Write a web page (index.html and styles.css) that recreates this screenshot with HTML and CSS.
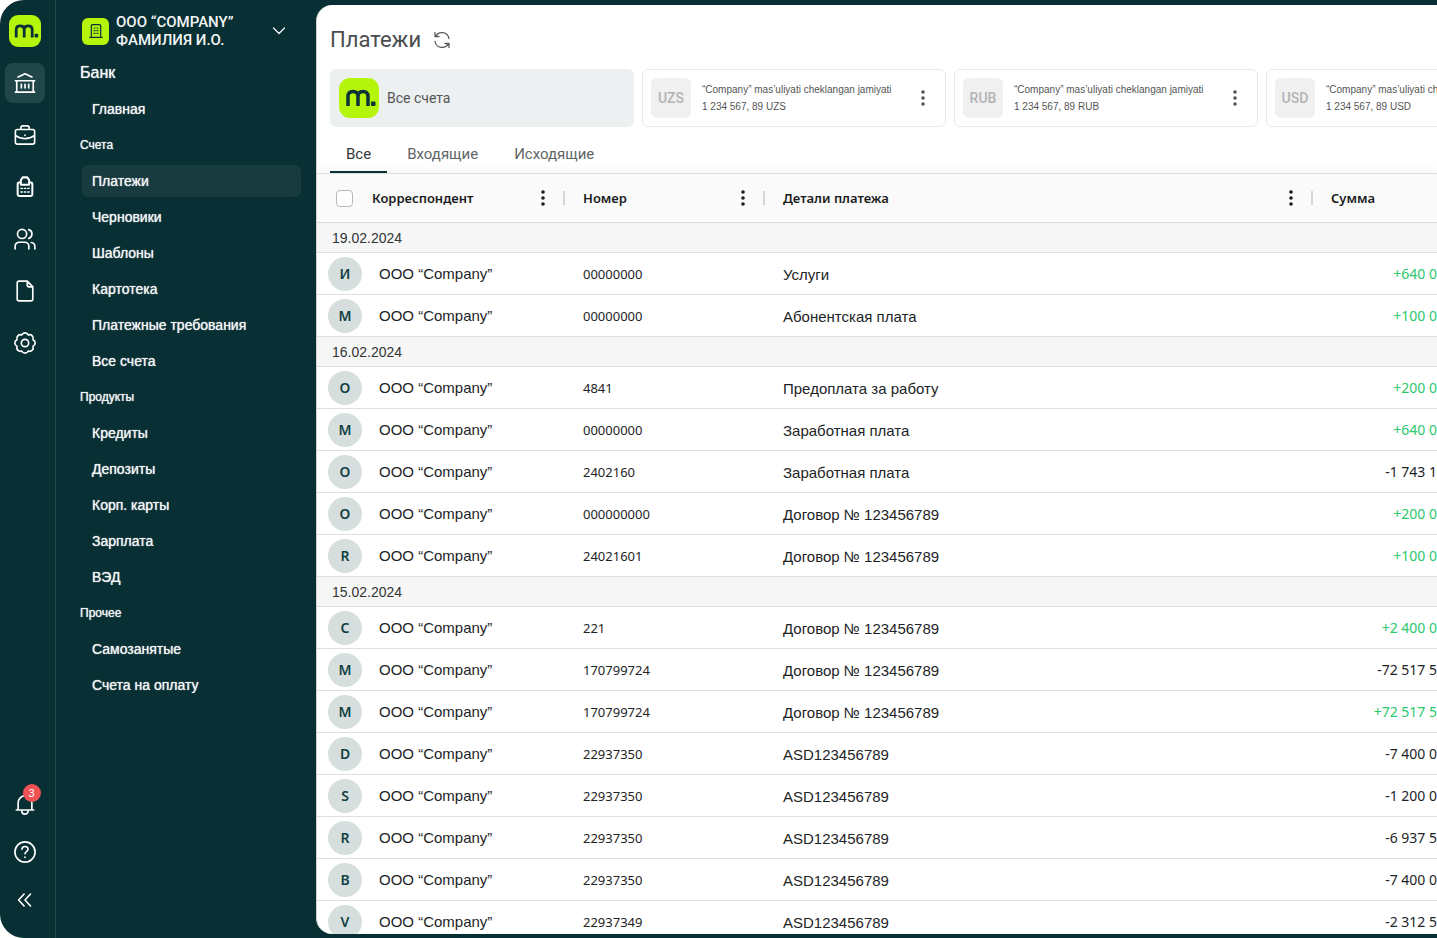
FILE: index.html
```html
<!DOCTYPE html>
<html lang="ru">
<head>
    <meta charset="UTF-8">
    <meta name="viewport" content="width=device-width, initial-scale=1.0">
    <title>Платежи</title>
    <link rel="stylesheet" href="styles.css">
</head>
<body>
    <div class="app">
        <!-- Узкая панель с иконками -->
        <nav class="rail" aria-label="Разделы">
            <a href="#" class="logo" aria-label="m">
                <svg viewBox="0 0 40 40"><path d="M9 28V18.500Q9 13.500 14 13.500Q19 13.500 19 18.500V28M19 18.500Q19 13.500 24 13.500Q29 13.500 29 18.500V28"/><rect x="32" y="23.500" width="4.500" height="4.500" rx="1"/></svg>
            </a>
            <a href="#" class="rail-item active" aria-label="Банк">
                <svg viewBox="0 0 24 24"><path d="M4.500 5.500 12 2 19.500 5.500M1.500 9.500h21M3 9.500v12M21 9.500v12M1.500 22h21M8 13.500v4M12 13.500v4M16 13.500v4"/></svg>
            </a>
            <a href="#" class="rail-item" aria-label="Портфель">
                <svg viewBox="0 0 24 24"><path d="M3.500 6h17a2 2 0 0 1 2 2V20a2 2 0 0 1-2 2h-17a2 2 0 0 1-2-2V8a2 2 0 0 1 2-2zM7.500 6V4a2 2 0 0 1 2-2h5a2 2 0 0 1 2 2v2M1.500 12.500Q6 16 12 16t10.500-3.500M12 12v.5"/></svg>
            </a>
            <a href="#" class="rail-item" aria-label="Касса">
                <svg class="bold" viewBox="0 0 24 24"><path d="M7 7H5.500a1.500 1.500 0 0 0-1.500 1.500V20a1.800 1.800 0 0 0 1.800 1.800h12.400A1.800 1.800 0 0 0 20 20V8.500A1.500 1.500 0 0 0 18.500 7H17M7.500 9.500V4.500L9.500 1.500h5l2 3v5z"/><path class="thin" d="M7.500 13.500H9M11.300 13.500h1.500M15 13.500h1.500M7.500 17.500H9M11.300 17.500h1.500M15 17.500h1.500"/></svg>
            </a>
            <a href="#" class="rail-item" aria-label="Сотрудники">
                <svg viewBox="0 0 24 24"><circle cx="8.800" cy="6.500" r="5"/><path d="M1.200 22.800V20a4.500 4.500 0 0 1 4.500-4.500h6A4.500 4.500 0 0 1 16.200 20v2.800M16 1.800a5 5 0 0 1 0 9.600M18.800 15.800a4.500 4.500 0 0 1 4 4.400v2.600"/></svg>
            </a>
            <a href="#" class="rail-item" aria-label="Документы">
                <svg viewBox="0 0 24 24"><path d="M14.500 1.200H5.500a2 2 0 0 0-2 2v17.600a2 2 0 0 0 2 2h13a2 2 0 0 0 2-2V7.500zM14.500 1.200v4.300a2 2 0 0 0 2 2h4"/></svg>
            </a>
            <a href="#" class="rail-item" aria-label="Настройки">
                <svg viewBox="0 0 24 24"><circle cx="12" cy="12" r="4"/><path d="M8.400 3.300a3.900 3.900 0 0 1 7.200 0a3.900 3.900 0 0 1 5.100 5.100a3.900 3.900 0 0 1 0 7.200a3.900 3.900 0 0 1-5.100 5.100a3.900 3.900 0 0 1-7.200 0a3.900 3.900 0 0 1-5.100-5.100a3.900 3.900 0 0 1 0-7.200a3.900 3.900 0 0 1 5.100-5.100z"/></svg>
            </a>
            <div class="rail-bottom">
                <button type="button" class="rail-item" aria-label="Уведомления">
                    <svg viewBox="0 0 24 24"><path d="M2.500 18.500h19M4.500 18.500V11a7.500 8 0 0 1 15 0v7.500M8.500 19v.5a3.500 3.500 0 0 0 7 0V19"/></svg>
                    <span class="badge">3</span>
                </button>
                <button type="button" class="rail-item" aria-label="Помощь">
                    <svg viewBox="0 0 24 24"><circle cx="12" cy="12" r="11"/><path d="M8.700 9a3.300 3 0 0 1 6.600 0c0 2.500-3.300 2.500-3.300 5M12 17.500v.5"/></svg>
                </button>
                <button type="button" class="rail-item" aria-label="Свернуть">
                    <svg viewBox="0 0 24 24"><path d="M11 5.500 5 12l6 6.500M18 5.500 12 12l6 6.500"/></svg>
                </button>
            </div>
        </nav>

        <!-- Меню -->
        <aside class="sidebar">
            <button type="button" class="company">
                <span class="company-icon">
                    <svg viewBox="0 0 24 24"><path d="M5 21V4a1.500 1.500 0 0 1 1.500-1.500h11A1.500 1.500 0 0 1 19 4v17M2.500 21.500h19"/><path d="M9 7.500h1.500M13.500 7.500H15M9 11.500h1.500M13.500 11.500H15M9 15.500h1.500M13.500 15.500H15"/></svg>
                </span>
                <span class="company-name">ООО “COMPANY”<br>ФАМИЛИЯ И.О.</span>
                <svg class="chevron" viewBox="0 0 14 14"><path d="M1.500 4 7 9.500 12.500 4"/></svg>
            </button>
            <ul class="menu">
                <li class="menu-title">Банк</li>
                <li><a href="#">Главная</a></li>
                <li class="menu-group">Счета</li>
                <li><a href="#" class="active">Платежи</a></li>
                <li><a href="#">Черновики</a></li>
                <li><a href="#">Шаблоны</a></li>
                <li><a href="#">Картотека</a></li>
                <li><a href="#">Платежные требования</a></li>
                <li><a href="#">Все счета</a></li>
                <li class="menu-group">Продукты</li>
                <li><a href="#">Кредиты</a></li>
                <li><a href="#">Депозиты</a></li>
                <li><a href="#">Корп. карты</a></li>
                <li><a href="#">Зарплата</a></li>
                <li><a href="#">ВЭД</a></li>
                <li class="menu-group">Прочее</li>
                <li><a href="#">Самозанятые</a></li>
                <li><a href="#">Счета на оплату</a></li>
            </ul>
        </aside>

        <!-- Содержимое -->
        <main class="content">
            <header class="page-head">
                <h1>Платежи</h1>
                <button type="button" class="refresh" aria-label="Обновить">
                    <svg viewBox="0 0 18 18"><path d="M2 1.500v4h4M2.500 5.500A7.200 7.200 0 0 1 16 7.500M16 16.500v-4h-4M15.500 12.500A7.200 7.200 0 0 1 2 10.500"/></svg>
                </button>
            </header>

            <section class="accounts">
                <div class="account selected">
                    <span class="logo logo-big">
                        <svg viewBox="0 0 40 40"><path d="M9 28V18.500Q9 13.500 14 13.500Q19 13.500 19 18.500V28M19 18.500Q19 13.500 24 13.500Q29 13.500 29 18.500V28"/><rect x="32" y="23.500" width="4.500" height="4.500" rx="1"/></svg>
                    </span>
                    <span class="account-all">Все счета</span>
                </div>
                <div class="account">
                    <span class="currency">UZS</span>
                    <span class="account-info">“Company” mas’uliyati cheklangan jamiyati<br>1 234 567, 89 UZS</span>
                    <button type="button" class="dots" aria-label="Действия"><svg viewBox="0 0 4 18"><circle cx="2" cy="3" r="1.800"/><circle cx="2" cy="9" r="1.800"/><circle cx="2" cy="15" r="1.800"/></svg></button>
                </div>
                <div class="account">
                    <span class="currency">RUB</span>
                    <span class="account-info">“Company” mas’uliyati cheklangan jamiyati<br>1 234 567, 89 RUB</span>
                    <button type="button" class="dots" aria-label="Действия"><svg viewBox="0 0 4 18"><circle cx="2" cy="3" r="1.800"/><circle cx="2" cy="9" r="1.800"/><circle cx="2" cy="15" r="1.800"/></svg></button>
                </div>
                <div class="account">
                    <span class="currency">USD</span>
                    <span class="account-info">“Company” mas’uliyati cheklangan jamiyati<br>1 234 567, 89 USD</span>
                    <button type="button" class="dots" aria-label="Действия"><svg viewBox="0 0 4 18"><circle cx="2" cy="3" r="1.800"/><circle cx="2" cy="9" r="1.800"/><circle cx="2" cy="15" r="1.800"/></svg></button>
                </div>
            </section>

            <div class="tabs">
                <button type="button" class="tab active">Все</button>
                <button type="button" class="tab">Входящие</button>
                <button type="button" class="tab">Исходящие</button>
            </div>

            <div class="table-wrap">
                <table class="payments">
                    <colgroup>
                        <col class="col-name">
                        <col class="col-number">
                        <col>
                        <col class="col-sum">
                    </colgroup>
                    <thead>
                        <tr>
                            <th class="with-check"><div class="th"><input type="checkbox" aria-label="Выбрать все"><span>Корреспондент</span><button type="button" class="dots" aria-label="Меню столбца"><svg viewBox="0 0 4 18"><circle cx="2" cy="3" r="1.800"/><circle cx="2" cy="9" r="1.800"/><circle cx="2" cy="15" r="1.800"/></svg></button></div></th>
                            <th><div class="th"><span>Номер</span><button type="button" class="dots" aria-label="Меню столбца"><svg viewBox="0 0 4 18"><circle cx="2" cy="3" r="1.800"/><circle cx="2" cy="9" r="1.800"/><circle cx="2" cy="15" r="1.800"/></svg></button></div></th>
                            <th><div class="th"><span>Детали платежа</span><button type="button" class="dots" aria-label="Меню столбца"><svg viewBox="0 0 4 18"><circle cx="2" cy="3" r="1.800"/><circle cx="2" cy="9" r="1.800"/><circle cx="2" cy="15" r="1.800"/></svg></button></div></th>
                            <th><div class="th last"><span>Сумма</span></div></th>
                        </tr>
                    </thead>
                    <tbody>
                        <tr class="date"><td colspan="4">19.02.2024</td></tr>
                        <tr><td class="name"><div class="person"><span class="avatar">И</span>ООО “Company”</div></td><td class="number">00000000</td><td class="details">Услуги</td><td class="sum plus">+640 0</td></tr>
                        <tr><td class="name"><div class="person"><span class="avatar">М</span>ООО “Company”</div></td><td class="number">00000000</td><td class="details">Абонентская плата</td><td class="sum plus">+100 0</td></tr>
                        <tr class="date"><td colspan="4">16.02.2024</td></tr>
                        <tr><td class="name"><div class="person"><span class="avatar">О</span>ООО “Company”</div></td><td class="number">4841</td><td class="details">Предоплата за работу</td><td class="sum plus">+200 0</td></tr>
                        <tr><td class="name"><div class="person"><span class="avatar">М</span>ООО “Company”</div></td><td class="number">00000000</td><td class="details">Заработная плата</td><td class="sum plus">+640 0</td></tr>
                        <tr><td class="name"><div class="person"><span class="avatar">О</span>ООО “Company”</div></td><td class="number">2402160</td><td class="details">Заработная плата</td><td class="sum">-1 743 1</td></tr>
                        <tr><td class="name"><div class="person"><span class="avatar">О</span>ООО “Company”</div></td><td class="number">000000000</td><td class="details">Договор № 123456789</td><td class="sum plus">+200 0</td></tr>
                        <tr><td class="name"><div class="person"><span class="avatar">R</span>ООО “Company”</div></td><td class="number">24021601</td><td class="details">Договор № 123456789</td><td class="sum plus">+100 0</td></tr>
                        <tr class="date"><td colspan="4">15.02.2024</td></tr>
                        <tr><td class="name"><div class="person"><span class="avatar">С</span>ООО “Company”</div></td><td class="number">221</td><td class="details">Договор № 123456789</td><td class="sum plus">+2 400 0</td></tr>
                        <tr><td class="name"><div class="person"><span class="avatar">М</span>ООО “Company”</div></td><td class="number">170799724</td><td class="details">Договор № 123456789</td><td class="sum">-72 517 5</td></tr>
                        <tr><td class="name"><div class="person"><span class="avatar">М</span>ООО “Company”</div></td><td class="number">170799724</td><td class="details">Договор № 123456789</td><td class="sum plus">+72 517 5</td></tr>
                        <tr><td class="name"><div class="person"><span class="avatar">D</span>ООО “Company”</div></td><td class="number">22937350</td><td class="details">ASD123456789</td><td class="sum">-7 400 0</td></tr>
                        <tr><td class="name"><div class="person"><span class="avatar">S</span>ООО “Company”</div></td><td class="number">22937350</td><td class="details">ASD123456789</td><td class="sum">-1 200 0</td></tr>
                        <tr><td class="name"><div class="person"><span class="avatar">R</span>ООО “Company”</div></td><td class="number">22937350</td><td class="details">ASD123456789</td><td class="sum">-6 937 5</td></tr>
                        <tr><td class="name"><div class="person"><span class="avatar">B</span>ООО “Company”</div></td><td class="number">22937350</td><td class="details">ASD123456789</td><td class="sum">-7 400 0</td></tr>
                        <tr><td class="name"><div class="person"><span class="avatar">V</span>ООО “Company”</div></td><td class="number">22937349</td><td class="details">ASD123456789</td><td class="sum">-2 312 5</td></tr>
                    </tbody>
                </table>
            </div>
        </main>
    </div>
</body>
</html>
```
FILE: styles.css
```css
* {
    box-sizing: border-box;
}

body {
    margin: 0;
    background-color: #ffffff;
    font-family: "Liberation Sans", Arial, sans-serif;
    font-size: 14px;
    color: #1d2426;
}

a {
    color: inherit;
    text-decoration: none;
}

button {
    padding: 0;
    border: none;
    background: none;
    color: inherit;
    font: inherit;
    cursor: pointer;
}

svg {
    display: block;
    fill: none;
    stroke: currentColor;
    stroke-linecap: round;
    stroke-linejoin: round;
}

.app {
    display: flex;
    height: 100vh;
    background-color: #082f33;
    border-radius: 24px 0 0 24px;
    overflow: hidden;
}

/* Панель с иконками */
.rail {
    display: flex;
    flex-direction: column;
    align-items: center;
    gap: 12px;
    flex: 0 0 56px;
    padding: 15px 6px 18px 0;
    border-right: 1px solid #24474b;
    color: #ffffff;
}

.logo {
    width: 32px;
    height: 32px;
    margin-bottom: 4px;
    background-color: #b5f50c;
    border-radius: 9px;
    color: #0b3237;
    flex-shrink: 0;
}

.logo svg {
    stroke-width: 3.5;
    stroke-linecap: butt;
}

.logo rect {
    fill: currentColor;
    stroke: none;
}

.rail-item {
    position: relative;
    display: flex;
    align-items: center;
    justify-content: center;
    width: 40px;
    height: 40px;
    border-radius: 8px;
}

.rail-item.active {
    background-color: #21464a;
}

.rail-item svg {
    width: 22px;
    height: 22px;
    stroke-width: 1.8;
}

.rail-item svg.bold {
    stroke-width: 2.2;
}

.rail-item .thin {
    stroke-width: 1.6;
}

.rail-bottom {
    display: flex;
    flex-direction: column;
    gap: 8px;
    margin-top: auto;
}

.badge {
    position: absolute;
    top: 0;
    right: 4px;
    width: 18px;
    height: 18px;
    border-radius: 50%;
    background-color: #ef5154;
    font-size: 11px;
    line-height: 18px;
    text-align: center;
}

/* Меню */
.sidebar {
    flex: 0 0 260px;
    padding: 13px 15px 0 24px;
    color: #f2f5f5;
}

.company {
    display: flex;
    align-items: center;
    width: 100%;
    padding: 0 15px 0 2px;
    text-align: left;
}

.company-icon {
    display: flex;
    align-items: center;
    justify-content: center;
    width: 27px;
    height: 27px;
    margin-right: 7px;
    background-color: #b5f50c;
    border-radius: 6px;
    color: #0b3237;
}

.company-icon svg {
    width: 16px;
    height: 16px;
    stroke-width: 1.8;
}

.company-name {
    font-family: Roboto, sans-serif;
    font-size: 15px;
    font-weight: 500;
    line-height: 18px;
}

.chevron {
    width: 14px;
    height: 14px;
    margin-left: auto;
    stroke-width: 1.3;
}

.menu {
    display: flex;
    flex-direction: column;
    gap: 4px;
    margin: 8px 0 0;
    padding: 0;
    list-style: none;
    line-height: 32px;
    text-shadow: 0 0 1px #f2f5f5;
}

.menu a {
    display: block;
    height: 32px;
    margin-left: 2px;
    padding: 0 10px;
    border-radius: 6px;
}

.menu a.active {
    background-color: #183b3f;
}

.menu-title {
    font-size: 16px;
}

.menu-group {
    font-size: 12px;
}

/* Содержимое */
.content {
    display: flex;
    flex-direction: column;
    flex: 1;
    min-width: 0;
    margin: 5px 0 4px;
    background-color: #ffffff;
    border-left: 1px solid #cdd3d4;
    border-radius: 16px 0 0 16px;
    overflow: hidden;
}

.page-head {
    display: flex;
    align-items: center;
    gap: 12px;
    padding: 21px 13px 0;
}

h1 {
    margin: 0;
    font-family: Roboto, sans-serif;
    font-size: 22px;
    font-weight: 400;
    line-height: 28px;
    color: #4a4d4f;
}

.refresh {
    color: #555a5c;
}

.refresh svg {
    width: 18px;
    height: 18px;
    stroke-width: 1.3;
}

.accounts {
    display: flex;
    gap: 8px;
    padding: 15px 0 0 13px;
    overflow: hidden;
}

.account {
    display: flex;
    align-items: center;
    flex: 0 0 304px;
    height: 58px;
    padding: 0 20px 0 8px;
    border: 1px solid #e4eaea;
    border-radius: 6px;
    color: #555555;
}

.account.selected {
    background-color: #ecf0f1;
    border-color: #ecf0f1;
}

.logo-big {
    width: 40px;
    height: 40px;
    margin: 0 8px 0 0;
    border-radius: 11px;
}

.account-all {
    font-family: Roboto, sans-serif;
    font-size: 14px;
}

.currency {
    width: 40px;
    height: 40px;
    margin-right: 11px;
    background-color: #f0f0f0;
    border-radius: 6px;
    color: #b3b3b5;
    font-family: Roboto, sans-serif;
    font-weight: 500;
    line-height: 40px;
    text-align: center;
}

.account-info {
    font-size: 10px;
    line-height: 17px;
    white-space: nowrap;
}

.dots {
    margin-left: auto;
}

.dots svg {
    width: 4px;
    height: 18px;
    fill: currentColor;
    stroke: none;
}

.tabs {
    display: flex;
    gap: 4px;
    padding: 10px 13px 0;
}

.tab {
    height: 36px;
    padding: 0 16px;
    border-bottom: 2px solid transparent;
    font-family: Roboto, sans-serif;
    font-size: 15px;
    color: #606567;
}

.tab.active {
    border-bottom-color: #0b3237;
    color: #33383a;
}

/* Таблица платежей */
.table-wrap {
    flex: 1;
    min-height: 0;
    border-top: 1px solid #dcdfdf;
    box-shadow: 0 -2px 12px rgba(0, 0, 0, 0.05);
    overflow: hidden;
}

.payments {
    width: 100%;
    table-layout: fixed;
    border-collapse: separate;
    border-spacing: 0;
}

.col-name {
    width: 248px;
}

.col-number {
    width: 200px;
}

.col-sum {
    width: 124px;
}

th {
    height: 49px;
    padding: 0;
    background-color: #fafafa;
    border-bottom: 1px solid #dcdddd;
    font-family: "Noto Sans", sans-serif;
    font-size: 13px;
    font-weight: 600;
    color: #1a1d1e;
}

.th {
    display: flex;
    align-items: center;
    height: 14px;
    padding: 0 18px;
    border-right: 2px solid #d6d6d6;
}

.th.last {
    border-right: none;
}

.with-check .th {
    padding-left: 19px;
}

.th input {
    appearance: none;
    width: 17px;
    height: 17px;
    margin: 0 19px 0 0;
    background-color: #ffffff;
    border: 1px solid #b4babb;
    border-radius: 4px;
}

td {
    height: 42px;
    padding: 0 0 0 18px;
    border-bottom: 1px solid #dddede;
}

.date td {
    height: 30px;
    padding-left: 15px;
    background-color: #f6f6f6;
    color: #303536;
}

td.name {
    padding-left: 11px;
    font-size: 15px;
}

.person {
    display: flex;
    align-items: center;
    gap: 17px;
}

.avatar {
    width: 34px;
    height: 34px;
    border-radius: 50%;
    background-color: #d6dfdd;
    font-family: "Noto Sans", sans-serif;
    font-size: 14px;
    font-weight: 600;
    line-height: 34px;
    text-align: center;
    color: #123f43;
}

td.number {
    font-family: "Noto Sans", sans-serif;
    font-size: 13px;
}

td.details {
    padding-top: 2px;
    font-size: 15px;
}

td.sum {
    padding: 0;
    font-family: "Noto Sans", sans-serif;
    font-size: 14px;
    text-align: right;
}

td.plus {
    color: #2bc76d;
}
```
